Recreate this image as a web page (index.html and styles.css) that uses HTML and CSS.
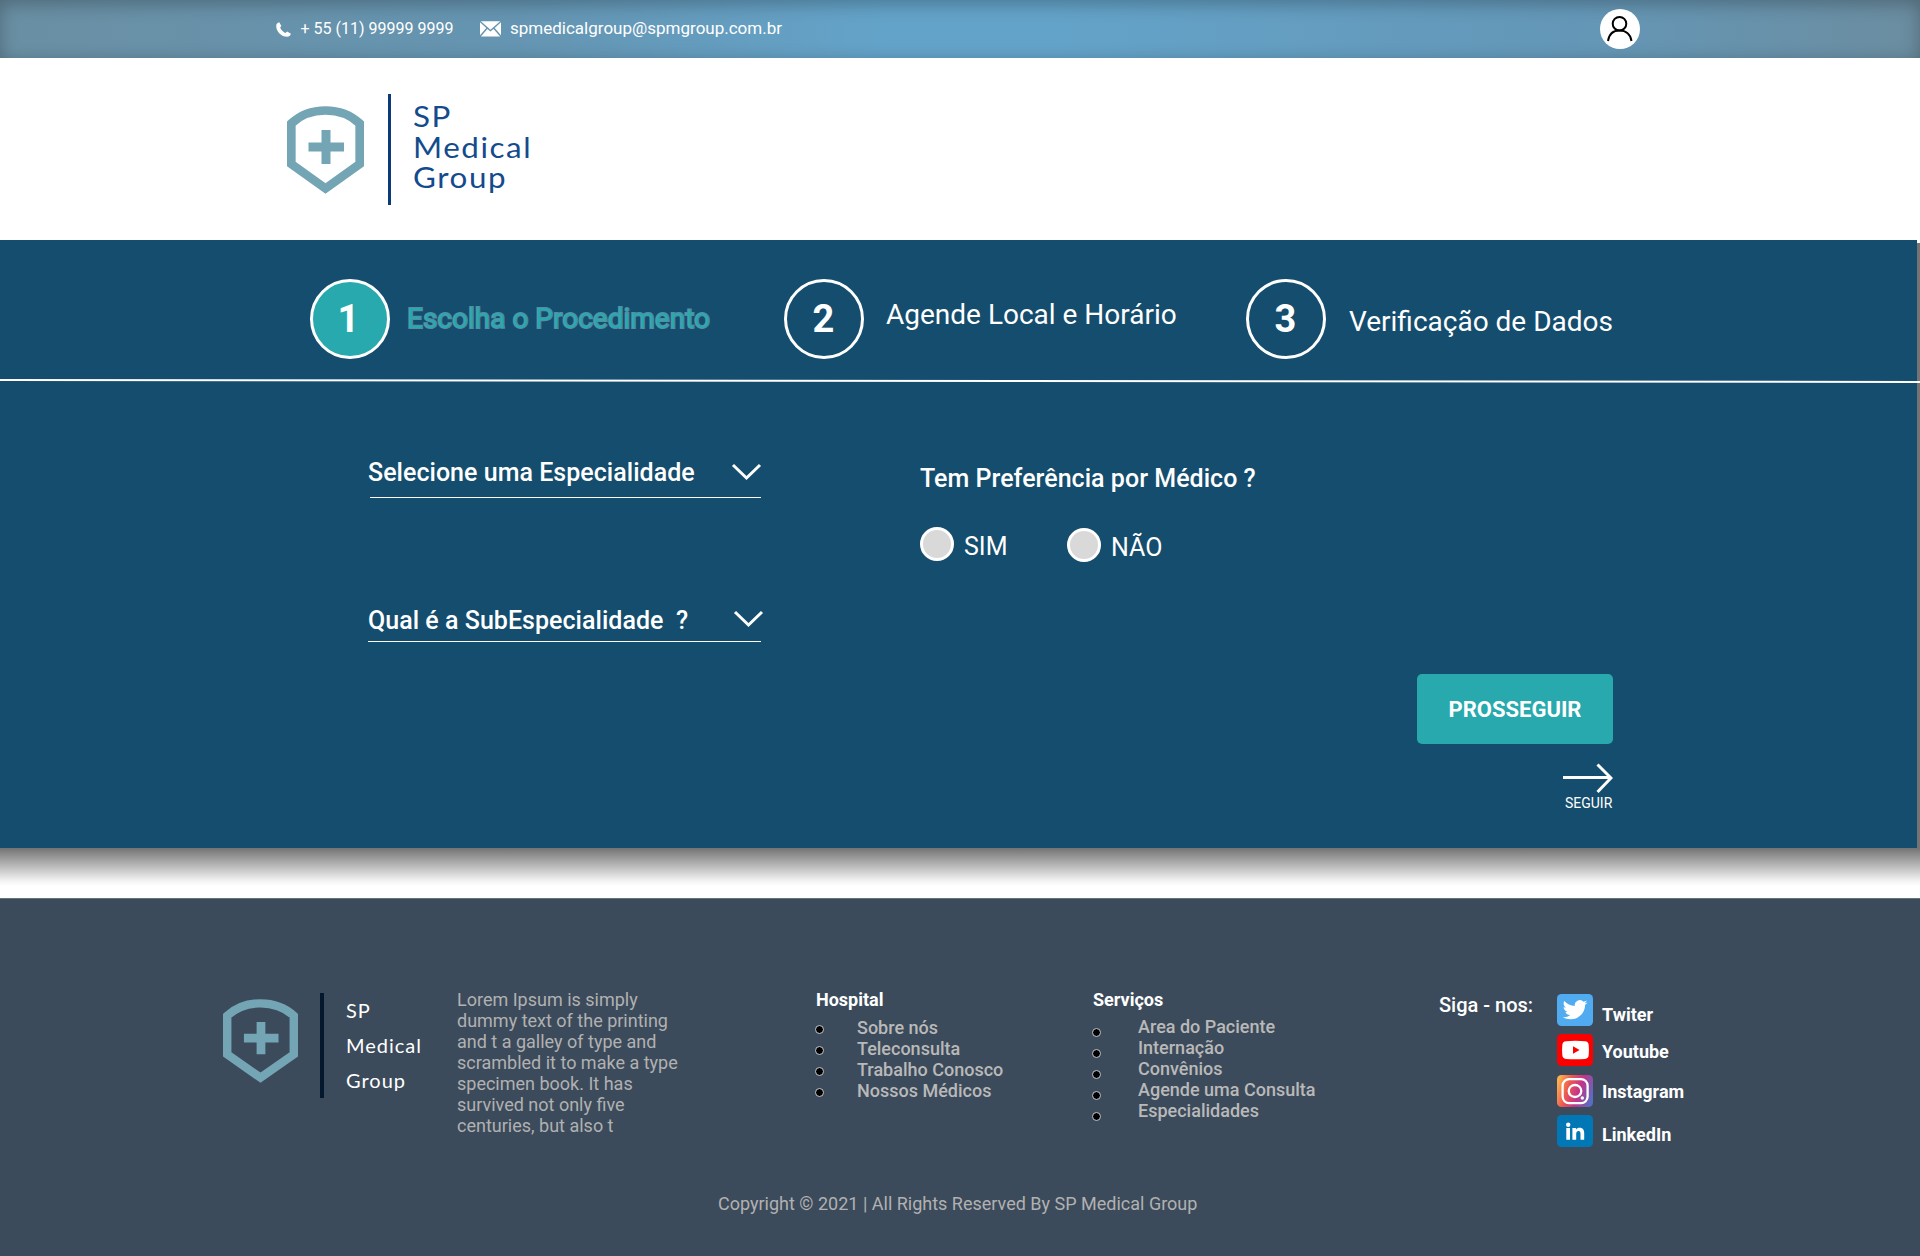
FILE: index.html
```html
<!DOCTYPE html>
<html lang="pt-br">
<head>
<meta charset="utf-8">
<title>SP Medical Group</title>
<link rel="stylesheet" href="styles.css">
</head>
<body>
<header class="topbar">
  <svg class="phone" width="15" height="15" viewBox="0 0 15 15"><path d="M3.2.3C1.500.8.2 2 .2 3.800c0 6 5 11 11 11 1.900 0 3.200-1.300 3.700-3.100L11.200 9.600c-.7.500-1.200 1.200-1.900 1.300C7.300 10.200 4.900 7.700 4.200 5.700c.1-.7.700-1.100 1.200-1.700z" fill="#fff"/></svg>
  <span class="tel">+ 55 (11) 99999 9999</span>
  <svg class="mail" width="21" height="16" viewBox="0 0 21 16"><path d="M.8.2h19.400L10.500 8.700zM0 1.300l6.300 5.600L0 14.200zM21 1.300v12.900l-6.300-7.300zM7.400 7.900l3.100 2.700 3.100-2.700 6.500 7.600H.9z" fill="#fff"/></svg>
  <span class="email">spmedicalgroup@spmgroup.com.br</span>
  <svg class="avatar" width="40" height="40" viewBox="0 0 40 40"><circle cx="20" cy="20" r="20" fill="#fff"/><g fill="none" stroke="#000" stroke-width="2"><circle cx="19.500" cy="14.700" r="6.800"/><path d="M8 32C9 25.500 13 21.500 19.500 21.500S30.500 25.500 31.500 32"/></g></svg>
</header>

<div class="brand">
  <svg class="shield" width="77" height="88" viewBox="0 0 77 88"><path d="M4.300 17.500Q18 4.500 38.500 4.500T72.700 17.500V58L38.500 82.500 4.300 58z" fill="none" stroke="#74a5b5" stroke-width="8.700"/><path d="M39 24v34M21.500 41H57" stroke="#74a5b5" stroke-width="9"/></svg>
  <div class="brand-rule"></div>
  <div class="brand-name"><div class="bn-a">SP</div><div class="bn-b">Medical</div><div class="bn-c">Group</div></div>
</div>

<main class="stage">
  <section class="panel">
    <ol class="steps">
      <li class="step step-one"><span class="num active">1</span><span class="label t1">Escolha o Procedimento</span></li>
      <li class="step step-two"><span class="num">2</span><span class="label t2">Agende Local e Horário</span></li>
      <li class="step step-three"><span class="num">3</span><span class="label t3">Verificação de Dados</span></li>
    </ol>
    <svg class="divider" width="1920" height="5" viewBox="0 0 1920 5"><path d="M0 1L1920 3" stroke="#fff" stroke-width="2"/></svg>
    <div class="form">
      <div class="selects">
        <div class="select first"><span class="q q1">Selecione uma Especialidade</span><svg class="chev" width="31" height="19" viewBox="0 0 31 19"><path d="M2 2L15.500 15 29 2" fill="none" stroke="#fff" stroke-width="3"/></svg></div>
        <div class="select second"><span class="q q2">Qual é a SubEspecialidade&nbsp; ?</span><svg class="chev" width="31" height="19" viewBox="0 0 31 19"><path d="M2 2L15.500 15 29 2" fill="none" stroke="#fff" stroke-width="3"/></svg></div>
      </div>
      <div class="doctor">
        <div class="q q3">Tem Preferência por Médico ?</div>
        <div class="options">
          <label class="option yes"><span class="radio"></span><span class="opt-text">SIM</span></label>
          <label class="option no"><span class="radio"></span><span class="opt-text">NÃO</span></label>
        </div>
      </div>
      <div class="actions">
        <button class="go">PROSSEGUIR</button>
        <svg class="arrow" width="51" height="31" viewBox="0 0 51 31"><path d="M1 14.500H49M35.500 1.500L49 15 35.500 29" fill="none" stroke="#fff" stroke-width="3"/></svg>
        <span class="next">SEGUIR</span>
      </div>
    </div>
  </section>
  <div class="edge"></div>
</main>
<div class="fade"></div>

<footer class="footer">
  <div class="cols">
    <svg class="fshield" width="75" height="84" viewBox="0 0 77 88" preserveAspectRatio="none"><path d="M4.300 17.500Q18 4.500 38.500 4.500T72.700 17.500V58L38.500 82.500 4.300 58z" fill="none" stroke="#74a5b5" stroke-width="8.700"/><path d="M39 24v34M21.500 41H57" stroke="#74a5b5" stroke-width="9"/></svg>
    <div class="frule"></div>
    <div class="fname"><div class="fn-a">SP</div><div class="fn-b">Medical</div><div class="fn-c">Group</div></div>
    <p class="lorem">Lorem Ipsum is simply<br>dummy text of the printing<br>and t a galley of type and<br>scrambled it to make a type<br>specimen book. It has<br>survived not only five<br>centuries, but also t</p>
    <div class="links hosp">
      <h3>Hospital</h3>
      <ul><li>Sobre nós</li><li>Teleconsulta</li><li>Trabalho Conosco</li><li>Nossos Médicos</li></ul>
    </div>
    <div class="links serv">
      <h3>Serviços</h3>
      <ul><li>Area do Paciente</li><li>Internação</li><li>Convênios</li><li>Agende uma Consulta</li><li>Especialidades</li></ul>
    </div>
    <div class="follow">Siga - nos:</div>
    <div class="social">
      <div class="net"><svg width="36" height="32" viewBox="0 0 36 32"><rect width="36" height="32" rx="4.500" fill="#50abf1"/><path transform="translate(5.600 4) scale(1.040 .98)" d="M23.950 4.570a10 10 0 0 1-2.820.770 4.960 4.960 0 0 0 2.160-2.720c-.95.550-2 .95-3.130 1.180a4.920 4.920 0 0 0-8.380 4.480C7.690 8.100 4.070 6.130 1.640 3.160a4.920 4.920 0 0 0 1.520 6.570 4.900 4.900 0 0 1-2.230-.61v.06c0 2.380 1.700 4.370 3.950 4.820a5 5 0 0 1-2.210.080 4.940 4.940 0 0 0 4.600 3.420A9.870 9.870 0 0 1 0 19.540a13.990 13.990 0 0 0 7.550 2.210c9.050 0 14-7.500 14-13.980 0-.21 0-.42-.02-.63a9.940 9.940 0 0 0 2.420-2.570z" fill="#fff"/></svg><span>Twiter</span></div>
      <div class="net yt"><svg width="36" height="32" viewBox="0 0 36 32"><rect width="36" height="32" rx="4.500" fill="#fc0000"/><path d="M9 7.200Q18.500 6.400 28 7.200 31.400 7.400 31.700 11q.5 5 0 10-.3 3.700-3.700 3.900-9.500.8-19 0Q5.600 24.700 5.300 21q-.5-5 0-10Q5.600 7.400 9 7.200z" fill="#fff"/><path d="M16 12.200l6.600 3.800-6.600 3.800z" fill="#fc0000"/></svg><span>Youtube</span></div>
      <div class="net ig"><svg width="36" height="32" viewBox="0 0 36 32"><defs><linearGradient id="ig1" x1="0" y1=".3" x2="1" y2=".6"><stop offset="0" stop-color="#fdb04e"/><stop offset=".3" stop-color="#ec5a50"/><stop offset=".62" stop-color="#c3338b"/><stop offset="1" stop-color="#5a6cc0"/></linearGradient></defs><rect width="36" height="32" rx="4.500" fill="url(#ig1)"/><g fill="none" stroke="#fff" stroke-width="2.300"><rect x="5.600" y="4.100" width="25" height="24" rx="6.500"/><ellipse cx="18" cy="16" rx="6.300" ry="6"/></g><circle cx="25.300" cy="23" r="1.700" fill="#fff"/></svg><span>Instagram</span></div>
      <div class="net li"><svg width="36" height="32" viewBox="0 0 36 32"><rect width="36" height="32" rx="4.500" fill="#0177b5"/><path d="M9.300 13h3.700v11.700H9.300zM15.400 13h3.500v1.700c.8-1.400 2.100-2 3.700-2 3.300 0 4.600 2.100 4.600 5.400v6.600h-3.700v-5.900c0-1.800-.5-2.900-1.900-2.900-1.600 0-2.400 1.100-2.400 2.900v5.900h-3.800z" fill="#fff"/><circle cx="11.200" cy="9.700" r="2.200" fill="#fff"/></svg><span>LinkedIn</span></div>
    </div>
  </div>
  <div class="copy">Copyright © 2021 | All Rights Reserved By SP Medical Group</div>
</footer>
</body>
</html>
```
FILE: styles.css
```css
* { box-sizing: border-box; }
body { margin: 0; width: 1920px; height: 1256px; overflow: hidden; background: #fff; font-family: Roboto, "Liberation Sans", sans-serif; color: #fff; }
svg { display: block; flex: none; }
span, h3, button { white-space: nowrap; }

.topbar { height: 58px; display: flex; align-items: flex-start; padding-left: 276px; font-size: 16px; line-height: 19px;
  background: linear-gradient(90deg, #6a8fa3 0%, #6595b2 27%, #64a3c9 46%, #64a3c9 55%, #6497b7 82%, #6b8da0 100%);
  box-shadow: inset 0 4px 18px rgba(0, 0, 0, .27); }
.phone { margin-top: 22px; }
.tel { width: 152px; margin: 19px 0 0 9.5px; }
.mail { margin: 21px 0 0 27.5px; }
.email { width: 272px; margin: 19px 0 0 9px; font-size: 17px; }
.avatar { margin: 9px 0 0 818px; }

.brand { height: 182px; display: flex; align-items: flex-start; padding-left: 287px; font-family: Lato, sans-serif; }
.shield { margin-top: 48px; }
.brand-rule { width: 3px; height: 111px; margin: 36px 0 0 24px; background: #0b3a78; }
.brand-name { margin: 43px 0 0 22px; font-size: 28px; line-height: 30.5px; letter-spacing: 1.4px; color: #134b8c; transform: scaleX(1.12); transform-origin: 0 0; }

.stage { display: flex; height: 608px; }
.panel { width: 1917px; height: 608px; background: #144d6d; }
.edge { width: 3px; margin-top: 3px; background: #747474; }
.steps { display: flex; align-items: flex-start; height: 139px; margin: 0; padding: 39px 0 0 310px; list-style: none; }
.step { display: flex; align-items: flex-start; }
.step-one { width: 474px; }
.step-two { width: 462px; }
.num { display: flex; align-items: center; justify-content: center; width: 80px; height: 80px; padding-right: 1px; border: 3px solid #fff; border-radius: 50%; font-size: 38px; font-weight: 700; }
.num.active { padding-right: 3px; background: #27a9ae; }
.label { font-size: 28px; line-height: 33px; }
.t1 { margin: 23px 0 0 17px; color: #27a9ae; -webkit-text-stroke: 2px #5a8ba3; paint-order: stroke fill; }
.t2 { margin: 19px 0 0 22px; }
.t3 { margin: 26px 0 0 23px; }
.divider { position: relative; height: 5px; }

.form { display: flex; align-items: flex-start; height: 464px; padding-left: 368px; }
.selects { width: 552px; }
.select { display: flex; align-items: flex-start; justify-content: space-between; }
.q { font-size: 25px; line-height: 29px; font-weight: 500; letter-spacing: .03px; }
.first { width: 393px; height: 57px; margin-top: 57px; padding-top: 17px; background: linear-gradient(#fff, #fff) 2px 56px / 391px 1px no-repeat; }
.chev { margin-top: 5px; }
.first .chev { margin-right: -1px; }
.second { width: 393px; height: 36px; margin-top: 108px; border-bottom: 1px solid #fff; }
.second .chev { margin: 4px -3px 0 0; }
.doctor { width: 497px; padding-top: 80px; }
.options { display: flex; margin-top: 34px; }
.option { display: flex; align-items: flex-start; }
.yes { width: 147px; }
.no { margin-top: 1px; }
.radio { width: 34px; height: 34px; border: 3px solid #fff; border-radius: 50%; background: #d9d9d9; }
.opt-text { margin: 5px 0 0 10px; font-size: 25px; line-height: 29px; }
.actions { display: flex; flex-direction: column; align-items: flex-end; width: 196px; padding-top: 290px; }
.go { width: 196px; height: 70px; padding: 0; border: 0; border-radius: 5px; background: #27a9ae; color: #fff; font: 700 22px Roboto, sans-serif; }
.arrow { margin-top: 19px; }
.next { margin: 1px .7px 0 0; font-size: 14px; line-height: 16px; }

.fade { height: 50px; background: linear-gradient(#737373 0, #a2a2a2 12px, #d0d0d0 24px, #f0f0f0 32px, #fff 38px); }

.footer { height: 358px; background: #3c4b5b; border-top: 1px solid #66727e; }
.cols { display: flex; align-items: flex-start; height: 279px; padding: 90px 0 0 222.5px; font-size: 18px; line-height: 21px; }
.fshield { margin-top: 10px; }
.frule { width: 4px; height: 105px; margin: 4px 0 0 22.5px; background: #03182d; }
.fname { width: 111px; margin: 4px 0 0 22px; font-family: Lato, sans-serif; font-size: 20px; line-height: 35px; letter-spacing: 1px; }
.lorem { width: 359px; margin: 0; color: #b1b1b1; }
.links h3 { margin: 0; font-size: 18px; font-weight: 700; line-height: 21px; }
.links ul { margin: 7px 0 0; padding: 0; list-style: none; color: #b9b9b9; font-weight: 500; }
.links li { display: flex; align-items: flex-start; height: 21px; }
.links li::before { content: ""; width: 7px; height: 7px; margin: 8px 34px 0 0; border: 1px solid #b9bcbe; border-radius: 50%; background: #000; background-clip: padding-box; }
.hosp { width: 277px; }
.hosp ul, .serv ul { margin-left: -1px; }
.hosp li::before { margin-right: 33px; }
.serv { width: 346px; }
.serv ul { margin-top: 6px; }
.serv li::before { margin: 12px 37px 0 0; }
.follow { width: 118px; margin-top: 5px; font-size: 20px; font-weight: 500; line-height: 23px; }
.social { padding-top: 5px; font-weight: 700; }
.net { display: flex; align-items: flex-start; height: 40px; }
.net span { margin: 10px 0 0 9px; }
.net.yt { height: 41px; }
.yt span { margin-top: 7px; }
.ig span { margin-top: 6px; }
.li span { margin-top: 9px; }
.copy { margin-left: 718px; padding-top: 15px; font-size: 18px; line-height: 21px; color: #b1b1b1; }
```
